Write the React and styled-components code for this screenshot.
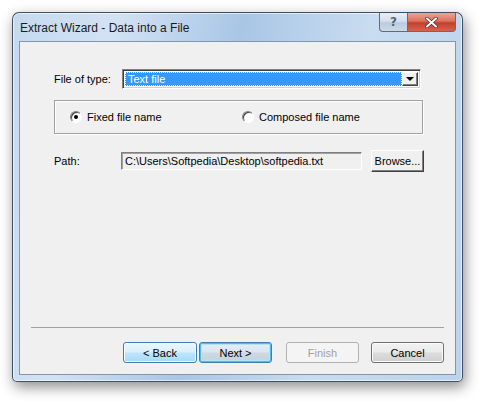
import React from "react";
import styled, { createGlobalStyle, css } from "styled-components";

const GlobalStyle = createGlobalStyle`
  html, body {
    margin: 0;
    padding: 0;
    background: #ffffff;
  }
  body {
    width: 483px;
    height: 403px;
    overflow: hidden;
    font-family: "Liberation Sans", Arial, sans-serif;
  }
`;

const Desktop = styled.div`
  padding: 12px 0 0 12px;
`;

const Frame = styled.div`
  width: 451px;
  height: 370px;
  box-sizing: border-box;
  border: 1px solid rgba(40, 55, 75, 0.85);
  border-radius: 7px 7px 5px 5px;
  background: linear-gradient(
    100deg,
    #c5d9ee 0%,
    #d3e2f3 20%,
    #a9c6e6 45%,
    #c9dcf0 70%,
    #bcd3ec 100%
  );
  box-shadow: 2px 5px 14px rgba(0, 0, 0, 0.45), inset 0 0 0 1px rgba(255, 255, 255, 0.6);
  display: flex;
  flex-direction: column;
  padding: 0 6px 6px 6px;
`;

const TitleBar = styled.div`
  height: 28px;
  display: flex;
  align-items: flex-start;
  justify-content: space-between;
`;

const Title = styled.div`
  font-family: "Liberation Sans", Arial, sans-serif;
  font-size: 12px;
  color: #1b1b1b;
  padding: 8px 0 0 1px;
`;

const CaptionButtons = styled.div`
  display: flex;
`;

const CaptionButton = styled.div`
  height: 19px;
  display: flex;
  align-items: center;
  justify-content: center;
  box-sizing: border-box;
  border: 1px solid #5d6d80;
  border-top: none;
  font-family: "DejaVu Sans", sans-serif;
  font-size: 12px;
  font-weight: bold;
  ${(p) =>
    p.$close
      ? css`
          width: 48px;
          border-radius: 0 0 4px 0;
          border-left: none;
          background: linear-gradient(180deg, #e9a795 0%, #d9735f 45%, #c33f2a 55%, #d8644b 100%);
          color: #fff;
        `
      : css`
          width: 29px;
          border-radius: 0 0 0 4px;
          background: linear-gradient(180deg, #e8eef5 0%, #d6e0eb 45%, #bccbdc 55%, #ccd9e7 100%);
          color: #56657a;
        `}
`;

const Client = styled.div`
  flex: 1;
  background: #f0f0f0;
  border: 1px solid #8195ab;
  box-sizing: border-box;
  display: flex;
  flex-direction: column;
  font-family: "Liberation Sans", Arial, sans-serif;
  font-size: 11px;
  color: #000;
`;

const Body = styled.div`
  flex: 1;
  padding: 27px 34px 0 34px;
  display: flex;
  flex-direction: column;
`;

const FieldRow = styled.div`
  display: grid;
  grid-template-columns: 68px 1fr auto;
  align-items: center;
  margin-top: ${(p) => p.$top || 0}px;
`;

const Label = styled.span`
  white-space: nowrap;
`;

const Combo = styled.div`
  grid-column: 2 / 4;
  height: 20px;
  box-sizing: border-box;
  border-top: 1px solid #808080;
  border-left: 1px solid #808080;
  border-right: 1px solid #ffffff;
  border-bottom: 1px solid #ffffff;
  box-shadow: inset 1px 1px 0 #404040, inset -1px -1px 0 #d4d0c8;
  background: #fff;
  display: flex;
  padding: 2px;
`;

const ComboValue = styled.div`
  flex: 1;
  background: #3399ff;
  color: #fff;
  padding: 0 3px;
  display: flex;
  align-items: center;
  outline: 1px dotted #ffffff;
  outline-offset: -1px;
`;

const ComboArrow = styled.div`
  width: 16px;
  box-sizing: border-box;
  background: #f0f0f0;
  border-top: 1px solid #ffffff;
  border-left: 1px solid #ffffff;
  border-right: 1px solid #404040;
  border-bottom: 1px solid #404040;
  box-shadow: inset -1px -1px 0 #808080;
  display: flex;
  align-items: center;
  justify-content: center;
  &::after {
    content: "";
    border-left: 4px solid transparent;
    border-right: 4px solid transparent;
    border-top: 4px solid #000;
  }
`;

const Group = styled.div`
  margin-top: 11px;
  margin-right: -2px;
  height: 34px;
  box-sizing: border-box;
  border: 1px solid #a0a0a0;
  box-shadow: 1px 1px 0 #ffffff, inset 1px 1px 0 #ffffff;
  display: grid;
  grid-template-columns: 172px 1fr;
  align-items: center;
  padding-left: 15px;
`;

const RadioLabel = styled.label`
  display: flex;
  align-items: center;
  gap: 5px;
`;

const RadioCircle = styled.span`
  width: 12px;
  height: 12px;
  box-sizing: border-box;
  border-radius: 50%;
  background: #fff;
  border: 1px solid;
  border-color: #808080 #ffffff #ffffff #808080;
  box-shadow: inset 1px 1px 0 #404040;
  display: flex;
  align-items: center;
  justify-content: center;
  &::after {
    content: "";
    width: 4px;
    height: 4px;
    border-radius: 50%;
    background: ${(p) => (p.$checked ? "#000" : "transparent")};
  }
`;

const PathBox = styled.div`
  height: 18px;
  margin-left: -1px;
  box-sizing: border-box;
  border: 1px solid;
  border-color: #808080 #ffffff #ffffff #808080;
  box-shadow: inset 1px 1px 0 #a0a0a0;
  background: #f0f0f0;
  padding: 0 3px;
  display: flex;
  align-items: center;
`;

const ClassicButton = styled.div`
  width: 53px;
  height: 22px;
  box-sizing: border-box;
  margin-left: 9px;
  margin-right: -3px;
  background: #f0f0f0;
  border: 1px solid;
  border-color: #ffffff #404040 #404040 #ffffff;
  box-shadow: inset -1px -1px 0 #808080;
  display: flex;
  align-items: center;
  justify-content: center;
`;

const Footer = styled.div`
  padding: 0 11px 11px 11px;
`;

const Separator = styled.div`
  border-top: 1px solid #a0a0a0;
`;

const ButtonRow = styled.div`
  display: flex;
  justify-content: flex-end;
  margin-top: 14px;
`;

const WizardButton = styled.div`
  width: ${(p) => p.$w || 73}px;
  height: 21px;
  box-sizing: border-box;
  margin-left: ${(p) => p.$gap || 0}px;
  border-radius: 3px;
  display: flex;
  align-items: center;
  justify-content: center;
  font-size: 11px;
  border: 1px solid #707070;
  background: linear-gradient(180deg, #f2f2f2 0%, #ebebeb 48%, #dddddd 52%, #cfcfcf 100%);
  box-shadow: inset 0 0 0 1px #fbfbfb;
  color: #000;
  ${(p) =>
    p.$variant === "hover" &&
    css`
      border-color: #3c7fb1;
      background: linear-gradient(180deg, #eaf6fd 0%, #d9f0fc 48%, #bee6fd 52%, #a7d9f5 100%);
    `}
  ${(p) =>
    p.$variant === "default" &&
    css`
      border-color: #3c7fb1;
      background: linear-gradient(180deg, #e5eef5 0%, #dbe5ee 48%, #cdd9e4 52%, #c4d3e0 100%);
      box-shadow: inset 0 0 0 1px #48bfef, inset 0 0 0 2px #b4e3f7;
    `}
  ${(p) =>
    p.$variant === "disabled" &&
    css`
      border-color: #adb2b5;
      background: #f4f4f4;
      box-shadow: none;
      color: #a0a0a0;
    `}
`;

export default function App() {
  return (
    <>
      <GlobalStyle />
      <Desktop>
        <Frame>
          <TitleBar>
            <Title>Extract Wizard - Data into a File</Title>
            <CaptionButtons>
              <CaptionButton>?</CaptionButton>
              <CaptionButton $close>
                <svg width="13" height="11" viewBox="0 0 13 11">
                  <path
                    d="M2 1.5 L11 9.5 M11 1.5 L2 9.5"
                    stroke="#5a2a22"
                    strokeWidth="3.4"
                    strokeLinecap="round"
                  />
                  <path
                    d="M2 1.5 L11 9.5 M11 1.5 L2 9.5"
                    stroke="#ffffff"
                    strokeWidth="2"
                    strokeLinecap="round"
                  />
                </svg>
              </CaptionButton>
            </CaptionButtons>
          </TitleBar>
          <Client>
            <Body>
              <FieldRow>
                <Label>File of type:</Label>
                <Combo>
                  <ComboValue>Text file</ComboValue>
                  <ComboArrow />
                </Combo>
              </FieldRow>
              <Group>
                <RadioLabel>
                  <RadioCircle $checked />
                  Fixed file name
                </RadioLabel>
                <RadioLabel>
                  <RadioCircle />
                  Composed file name
                </RadioLabel>
              </Group>
              <FieldRow $top={16}>
                <Label>Path:</Label>
                <PathBox>C:\Users\Softpedia\Desktop\softpedia.txt</PathBox>
                <ClassicButton>Browse...</ClassicButton>
              </FieldRow>
            </Body>
            <Footer>
              <Separator />
              <ButtonRow>
                <WizardButton $w={74} $variant="hover">&lt; Back</WizardButton>
                <WizardButton $w={73} $gap={2} $variant="default">Next &gt;</WizardButton>
                <WizardButton $w={73} $gap={14} $variant="disabled">Finish</WizardButton>
                <WizardButton $w={73} $gap={12}>Cancel</WizardButton>
              </ButtonRow>
            </Footer>
          </Client>
        </Frame>
      </Desktop>
    </>
  );
}
